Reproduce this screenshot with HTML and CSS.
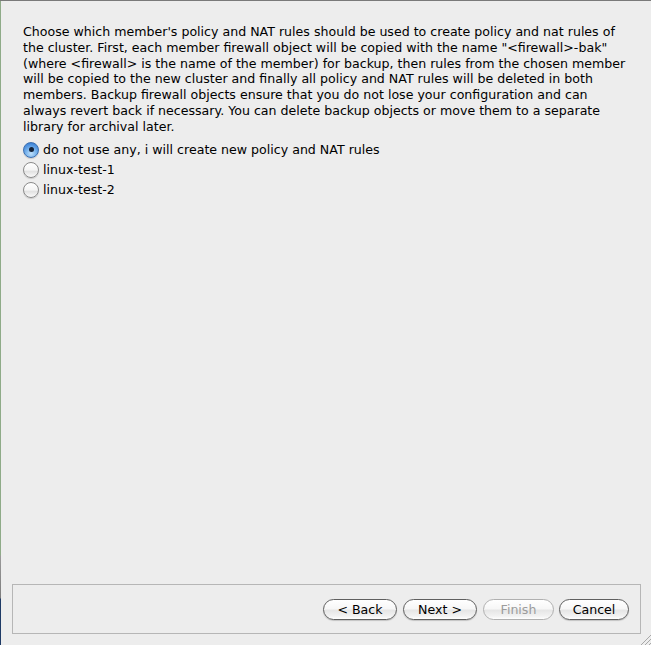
FILE: index.html
```html
<!DOCTYPE html>
<html>
<head>
<meta charset="utf-8">
<link rel="stylesheet" href="styles.css">
</head>
<body>
<div class="window">
  <div class="edge"></div>
  <div class="main">
    <div class="content">
      <p class="desc">Choose which member's policy and NAT rules should be used to create policy and nat rules of<br>the cluster. First, each member firewall object will be copied with the name "&lt;firewall&gt;-bak"<br>(where &lt;firewall&gt; is the name of the member) for backup, then rules from the chosen member<br>will be copied to the new cluster and finally all policy and NAT rules will be deleted in both<br>members. Backup firewall objects ensure that you do not lose your configuration and can<br>always revert back if necessary. You can delete backup objects or move them to a separate<br>library for archival later.</p>
      <div class="options">
        <label class="opt"><span class="radio on"></span><span>do not use any, i will create new policy and NAT rules</span></label>
        <label class="opt"><span class="radio"></span><span>linux-test-1</span></label>
        <label class="opt"><span class="radio"></span><span>linux-test-2</span></label>
      </div>
    </div>
    <div class="panel">
      <button class="btn">&lt; Back</button>
      <button class="btn">Next &gt;</button>
      <button class="btn disabled">Finish</button>
      <button class="btn">Cancel</button>
    </div>
  </div>
  <svg class="grip" width="12" height="12" viewBox="0 0 12 12">
    <line x1="2" y1="12" x2="12" y2="2" stroke="#a8a8a8" stroke-width="1"/>
    <line x1="6" y1="12" x2="12" y2="6" stroke="#a8a8a8" stroke-width="1"/>
    <line x1="10" y1="12" x2="12" y2="10" stroke="#a8a8a8" stroke-width="1"/>
  </svg>
</div>
</body>
</html>
```

FILE: styles.css
```css
* { box-sizing: border-box; }
html, body { margin: 0; padding: 0; }
body {
  width: 651px;
  height: 645px;
  background: #ededed;
  font-family: "DejaVu Sans", "Liberation Sans", sans-serif;
  font-size: 12.6px;
  color: #000;
  overflow: hidden;
}
.window {
  position: relative;
  display: flex;
  width: 651px;
  height: 645px;
  border-top: 1px solid #7a7a7a;
}
.edge {
  width: 1px;
  flex: none;
  background: linear-gradient(to bottom, #8fab88 0, #8fab88 554px, #9a9a9a 555px, #7d7d7d 597px, #1f3b66 598px, #1f3b66 100%);
}
.main {
  flex: 1;
  display: flex;
  flex-direction: column;
}
.content {
  flex: 1;
  padding: 23px 0 0 22px;
}
.desc {
  margin: 0;
  line-height: 15.8px;
  white-space: nowrap;
}
.options {
  margin-top: 5px;
  display: flex;
  flex-direction: column;
}
.opt {
  display: flex;
  align-items: center;
  height: 20px;
}
.radio {
  width: 16px;
  height: 16px;
  border-radius: 50%;
  margin-right: 4px;
  border: 1px solid #8a8a8a;
  background: linear-gradient(to bottom, #ffffff 0%, #f4f4f4 50%, #e2e2e2 60%, #fafafa 100%);
  box-shadow: 0 1px 1px rgba(0,0,0,0.15);
  display: flex;
  align-items: center;
  justify-content: center;
}
.radio.on {
  border-color: #3c6fb0;
  background: radial-gradient(circle at 50% 75%, #bfe0fb 0%, #7ab4ec 40%, #3f85d9 80%, #2f6cc0 100%);
}
.radio.on::after {
  content: "";
  width: 5px;
  height: 5px;
  border-radius: 50%;
  background: #14233a;
}
.panel {
  margin: 0 10px 11px 11px;
  height: 50px;
  border: 1px solid #b6b6b6;
  display: flex;
  align-items: center;
  justify-content: flex-end;
  gap: 6px;
  padding: 1px 11px 0 0;
}
.btn {
  height: 21px;
  min-width: 70px;
  padding: 0 10px;
  border-radius: 11px;
  border: 1px solid #5f5f5f;
  background: linear-gradient(to bottom, #ffffff 0%, #f7f7f7 45%, #e6e6e6 55%, #f2f2f2 85%, #ffffff 100%);
  box-shadow: 0 1px 1px rgba(0,0,0,0.18);
  font-family: "DejaVu Sans", "Liberation Sans", sans-serif;
  font-size: 12.6px;
  color: #000;
  line-height: 19px;
}
.btn:nth-child(1) { width: 74px; }
.btn:nth-child(2) { width: 74px; }
.btn:nth-child(3) { width: 71px; }
.btn:nth-child(4) { width: 70px; margin-left: -1px; }
.btn.disabled {
  color: #9c9c9c;
  border-color: #b0b0b0;
  box-shadow: none;
}
.grip {
  position: absolute;
  right: 0;
  bottom: 0;
}
```
